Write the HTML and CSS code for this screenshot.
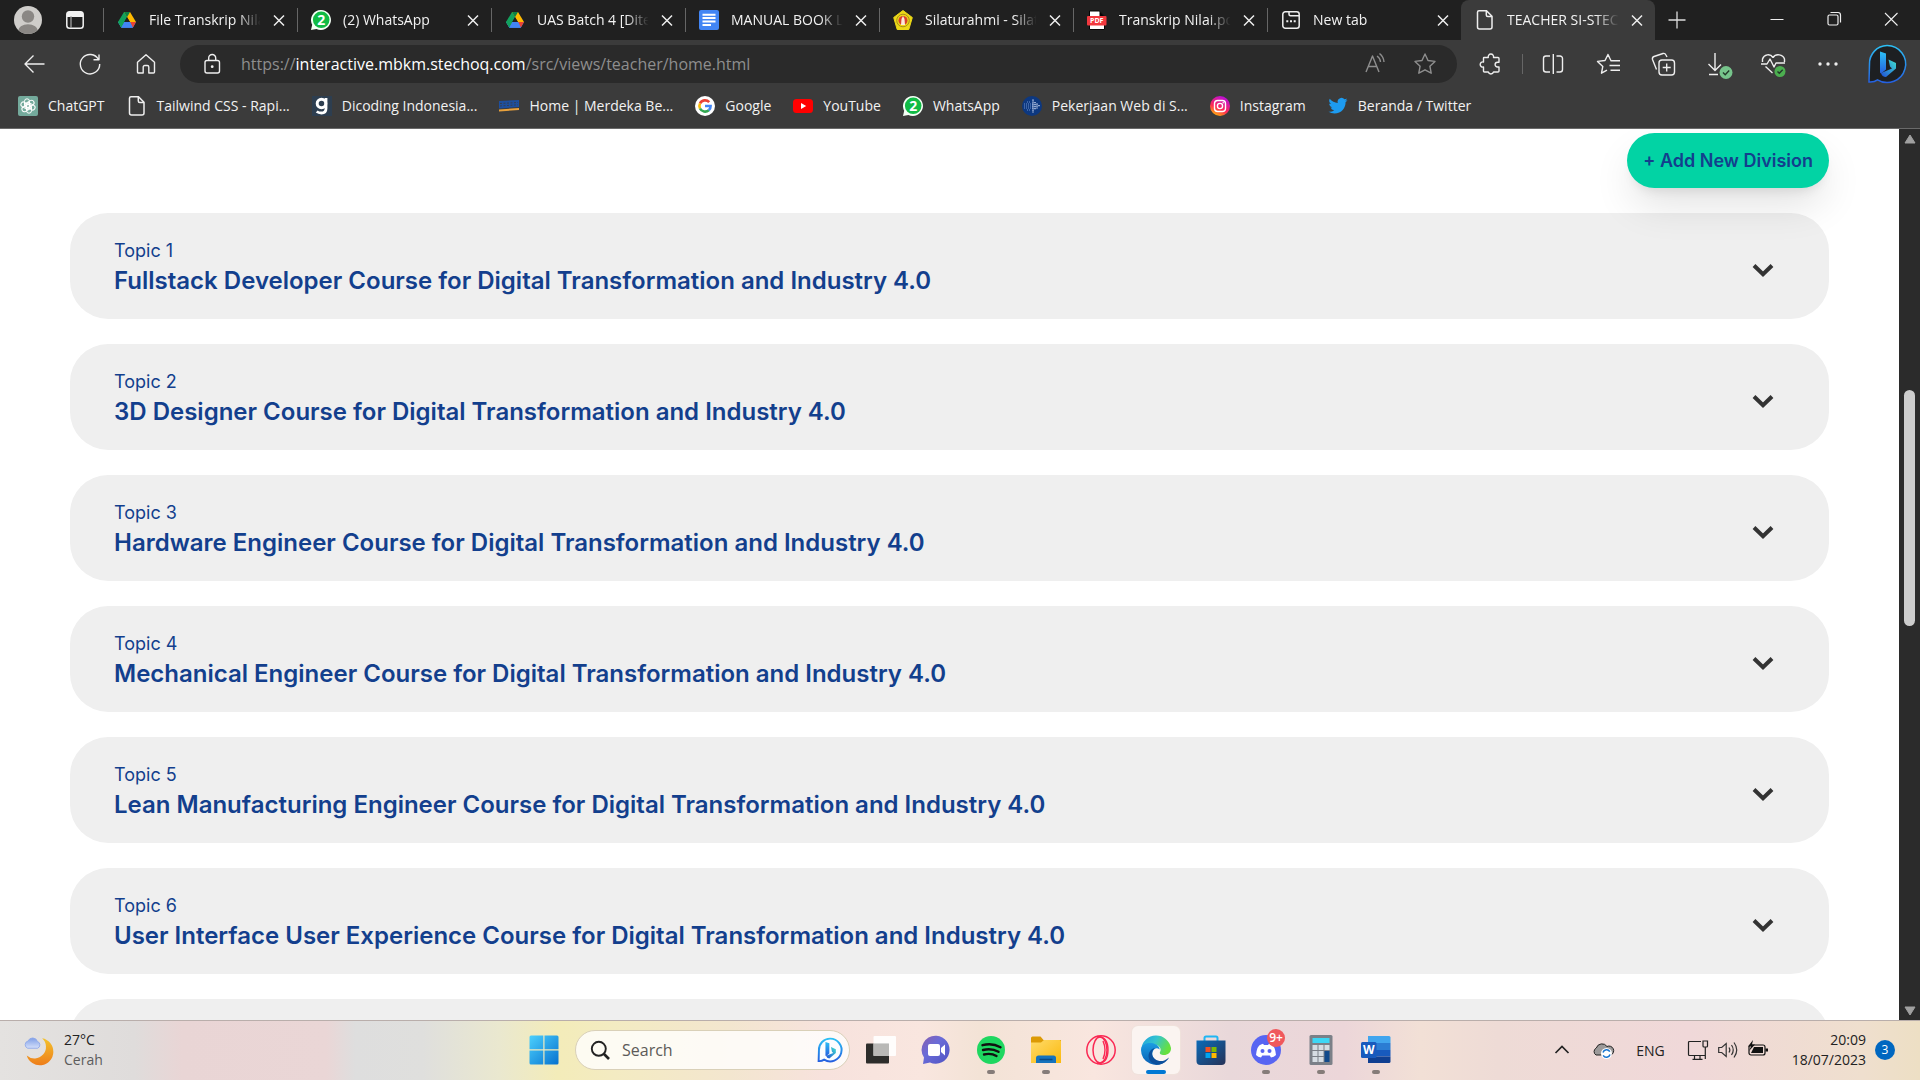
FILE: index.html
```html
<!DOCTYPE html>
<html lang="en">
<head>
<meta charset="utf-8">
<title>TEACHER SI-STECHOQ</title>
<link rel="stylesheet" href="styles.css">
</head>
<body>
<svg class="defs" width="0" height="0" aria-hidden="true">
  <defs>
    <linearGradient id="bingA" x1="0" y1="0" x2="0" y2="1"><stop offset="0" stop-color="#2cc0f5"/><stop offset="1" stop-color="#2560e0"/></linearGradient>
    <linearGradient id="bingB" x1="0" y1="1" x2="1" y2="0"><stop offset="0" stop-color="#1f4fd8"/><stop offset="1" stop-color="#3fe0d0"/></linearGradient>
    <linearGradient id="insta" x1="0.2" y1="1" x2="0.7" y2="0"><stop offset="0" stop-color="#ffc400"/><stop offset="0.4" stop-color="#ff2a55"/><stop offset="1" stop-color="#b80de0"/></linearGradient>
    <linearGradient id="winA" x1="0" y1="0" x2="1" y2="1"><stop offset="0" stop-color="#4cd0fd"/><stop offset="1" stop-color="#0672cf"/></linearGradient>
    <linearGradient id="moonA" x1="0" y1="0" x2="0" y2="1"><stop offset="0" stop-color="#f3c22c"/><stop offset="1" stop-color="#ee7d1a"/></linearGradient>
    <linearGradient id="cloudA" x1="0" y1="0" x2="0" y2="1"><stop offset="0" stop-color="#7f9ee6"/><stop offset="1" stop-color="#d5e0fa"/></linearGradient>
    <linearGradient id="chatA" x1="0" y1="0" x2="1" y2="1"><stop offset="0" stop-color="#8a5fae"/><stop offset="0.4" stop-color="#6a6cd8"/><stop offset="1" stop-color="#4f52c2"/></linearGradient>
    <linearGradient id="foldA" x1="0" y1="0" x2="1" y2="1"><stop offset="0" stop-color="#ffdb6a"/><stop offset="1" stop-color="#fbb90d"/></linearGradient>
    <linearGradient id="edgeA" x1="0" y1="0" x2="1" y2="0.4"><stop offset="0" stop-color="#1e9fe0"/><stop offset="0.5" stop-color="#35c4cf"/><stop offset="1" stop-color="#66e03f"/></linearGradient>
    <linearGradient id="edgeB" x1="0" y1="0" x2="0" y2="1"><stop offset="0" stop-color="#1b9de2"/><stop offset="1" stop-color="#0a5fb4"/></linearGradient>
    <linearGradient id="storeA" x1="0" y1="0" x2="1" y2="1"><stop offset="0" stop-color="#0b6bb8"/><stop offset="1" stop-color="#263257"/></linearGradient>
    <symbol id="close" viewBox="0 0 20 20"><path d="M5 5.500l10 10M15 5.500l-10 10" stroke="#eee" stroke-width="1.500" fill="none"/></symbol>
    <symbol id="drive" viewBox="0 0 20 20"><path d="M7 2h6L7.500 11.500 4.300 17.500 1 12z" fill="#12a15c"/><path d="M7 2h6l6 10h-6z" fill="#ffba00"/><path d="M7 2h6l-3 5.200z" fill="#0c8043"/><path d="M4.300 12H19l-3.200 5.700H4.300L1 12z" fill="#4285f4"/><path d="M13 12h6l-3.200 5.700z" fill="#ea4335"/><path d="M1 12l3.300 5.700L7.500 12 5 8z" fill="#12a15c"/><path d="M4.300 17.700L7.500 12h5.500l2.800 5.700z" fill="#4285f4"/><path d="M10 7.300l2.800 4.700H7.300z" fill="#202020"/></symbol>
    <symbol id="page" viewBox="0 0 20 20"><path d="M4 .8h7.500L17 6.300V17a2 2 0 0 1-2 2H4.500a2 2 0 0 1-2-2V2.300A1.500 1.500 0 0 1 4 .8zM11.300 1v4a1.500 1.500 0 0 0 1.500 1.500h4" fill="none" stroke="#eee" stroke-width="1.500"/></symbol>
    <symbol id="whats" viewBox="0 0 20 20"><path d="M10 0a10 10 0 1 1-4.600 18.900L0 20l1.200-5.200A10 10 0 0 1 10 0z" fill="#f4fff6"/><circle cx="10.200" cy="9.800" r="8.300" fill="#10bb45"/><text x="10.200" y="15" text-anchor="middle" class="whats-num">2</text></symbol>
    <symbol id="chev" viewBox="0 0 24 16"><path d="M3 2.500l9 8.700 9-8.700" fill="none" stroke="#333" stroke-width="4"/></symbol>
  </defs>
</svg>

<header class="browser">
  <div class="tabstrip">
    <button class="avatar" aria-label="Profile"><svg viewBox="0 0 28 28"><clipPath id="av"><circle cx="14" cy="14" r="14"/></clipPath><g clip-path="url(#av)"><rect width="28" height="28" fill="#cfcdca"/><circle cx="14" cy="10.500" r="6.200" fill="#8a8784"/><ellipse cx="14" cy="25" rx="10" ry="6.800" fill="#8a8784"/></g></svg></button>
    <button class="workspace" aria-label="Tab actions"><svg viewBox="0 0 20 20"><path d="M2 7V4.500A3 3 0 0 1 5 1.500h10a3 3 0 0 1 3 3V7z" fill="#f2f2f2"/><rect x="1.800" y="1.800" width="16.400" height="16.400" rx="2.800" fill="none" stroke="#f2f2f2" stroke-width="1.500"/><path d="M6 6v12" stroke="#aaa" stroke-width="1.200"/></svg></button>
    <div class="tab"><svg class="fav"><use href="#drive"/></svg><span class="tab-title">File Transkrip Nilai</span><button class="tab-close" aria-label="Close tab"><svg><use href="#close"/></svg></button></div>
    <div class="tab"><svg class="fav"><use href="#whats"/></svg><span class="tab-title">(2) WhatsApp</span><button class="tab-close" aria-label="Close tab"><svg><use href="#close"/></svg></button></div>
    <div class="tab"><svg class="fav"><use href="#drive"/></svg><span class="tab-title">UAS Batch 4 [Ditem</span><button class="tab-close" aria-label="Close tab"><svg><use href="#close"/></svg></button></div>
    <div class="tab"><svg class="fav" viewBox="0 0 20 20"><rect width="20" height="20" rx="2" fill="#4285f4"/><path d="M3.500 4.700h13M3.500 8h13M3.500 11.500h13M3.500 15h8.500" stroke="#fff" stroke-width="1.900"/></svg><span class="tab-title">MANUAL BOOK LM</span><button class="tab-close" aria-label="Close tab"><svg><use href="#close"/></svg></button></div>
    <div class="tab"><svg class="fav" viewBox="0 0 20 20"><path d="M10 .5l9.300 7-3.500 12H4.200L.7 7.500z" fill="#ecd916" stroke="#ecd916" stroke-linejoin="round"/><circle cx="10" cy="10.500" r="6.300" fill="none" stroke="#a88c1c"/><circle cx="10" cy="10.500" r="4.500" fill="#d8412c"/><path d="M10 6l1.500 3 .5 6H8l.5-6z" fill="#fbe9d8"/></svg><span class="tab-title">Silaturahmi - Silatu</span><button class="tab-close" aria-label="Close tab"><svg><use href="#close"/></svg></button></div>
    <div class="tab"><svg class="fav" viewBox="0 0 20 20"><path d="M2.500 1h10L17.500 6v13.500h-15z" fill="#fff" stroke="#050505"/><path d="M12.500 1v5h5z" fill="#050505"/><rect x="0" y="6" width="19.500" height="9.500" rx="1" fill="#f2383e"/><text x="9.700" y="13.300" text-anchor="middle" class="pdf-num">PDF</text></svg><span class="tab-title">Transkrip Nilai.pdf</span><button class="tab-close" aria-label="Close tab"><svg><use href="#close"/></svg></button></div>
    <div class="tab"><svg class="fav" viewBox="0 0 20 20"><rect x="1.800" y="1.800" width="16.400" height="16.400" rx="2.500" fill="none" stroke="#eee" stroke-width="1.500"/><path d="M8 2v2.200a1.500 1.500 0 0 0 1.500 1.500H18" fill="none" stroke="#eee" stroke-width="1.500"/><path d="M5.300 11.300h2M9 11.300h2M12.700 11.300h2" stroke="#eee" stroke-width="1.900"/></svg><span class="tab-title">New tab</span><button class="tab-close" aria-label="Close tab"><svg><use href="#close"/></svg></button></div>
    <div class="tab active"><svg class="fav"><use href="#page"/></svg><span class="tab-title">TEACHER SI-STECHO</span><button class="tab-close" aria-label="Close tab"><svg><use href="#close"/></svg></button></div>
    <button class="newtab" aria-label="New tab"><svg viewBox="0 0 20 20"><path d="M10 1.500v17M1.500 10h17" stroke="#ddd" stroke-width="1.300"/></svg></button>
    <div class="winctl">
      <button aria-label="Minimize"><svg viewBox="0 0 20 20"><path d="M3.500 10.500h13" stroke="#eee" stroke-width="1"/></svg></button>
      <button aria-label="Restore"><svg viewBox="0 0 20 20"><rect x="4" y="6" width="10" height="10" rx="1.500" fill="none" stroke="#eee" stroke-width="1.200"/><path d="M6.500 3.500H14A2.500 2.500 0 0 1 16.500 6v7.500" fill="none" stroke="#eee" stroke-width="1.200"/></svg></button>
      <button aria-label="Close window"><svg viewBox="0 0 20 20"><path d="M4 4l12.500 12.500M16.500 4L4 16.500" stroke="#eee" stroke-width="1.100"/></svg></button>
    </div>
  </div>

  <div class="toolbar">
    <div class="navbtns">
      <button aria-label="Back"><svg viewBox="0 0 24 24"><path d="M22.500 12H3M11.500 3.500L3 12l8.500 8.500" class="ln"/></svg></button>
      <button aria-label="Refresh"><svg viewBox="0 0 24 24"><path d="M20.500 7.500A9.700 9.700 0 1 0 21.700 12M21 2.500v5.300h-5.500" class="ln"/></svg></button>
      <button aria-label="Home"><svg viewBox="0 0 24 24"><path d="M3.500 10.200L12 2.700l8.500 7.500v9.800a1 1 0 0 1-1 1h-4.700v-6a1.500 1.500 0 0 0-1.500-1.500h-2.600A1.500 1.500 0 0 0 9.200 15v6H4.500a1 1 0 0 1-1-1z" class="ln"/></svg></button>
    </div>
    <div class="urlbar">
      <svg class="i24" viewBox="0 0 24 24"><rect x="5" y="8.500" width="14.500" height="12.500" rx="2" class="ln"/><path d="M8.700 8.500V6a3.500 3.500 0 0 1 7 0v2.500" class="ln"/><circle cx="12.200" cy="14.700" r="1.400" fill="#eee"/></svg>
      <a class="url" href="#">https://<b>interactive.mbkm.stechoq.com</b>/src/views/teacher/home.html</a>
      <button aria-label="Read aloud"><svg class="dim" viewBox="0 0 24 24"><path d="M3 20L9.500 4l6.500 16M5.300 14.500h8.500M14 4a8 8 0 0 1 3.500 6M16.500 1.500A12 12 0 0 1 21 10" class="ln"/></svg></button>
      <button aria-label="Add to favorites"><svg class="dim" viewBox="0 0 24 24"><path d="M12 2l3 6.500 7 .9-5.100 4.800 1.300 7L12 17.800l-6.200 3.400 1.300-7L2 9.400l7-.9z" class="ln"/></svg></button>
    </div>
    <div class="tools">
      <button aria-label="Extensions"><svg viewBox="0 0 24 24"><path d="M5 5.500h4.300a2.700 2.700 0 1 1 5.200 0H19q1 0 1 1v3.700h-1.500a2.400 2.400 0 0 0 0 4.800H20v4q0 1-1 1h-4.500a2.700 2.700 0 0 1-5.200 0H5.500q-1 0-1-1v-4a2.600 2.600 0 1 1 0-5V6q0-.5.500-.5z" class="ln"/></svg></button>
      <i class="tsep"></i>
      <button aria-label="Split screen"><svg viewBox="0 0 24 24"><path d="M9 4H5a2.500 2.500 0 0 0-2.500 2.500v11A2.500 2.500 0 0 0 5 20h4M15.500 4H19a2.500 2.500 0 0 1 2.500 2.500v11A2.500 2.500 0 0 1 19 20h-3.500M12.300 2v20" class="ln"/></svg></button>
      <button aria-label="Favorites"><svg viewBox="0 0 24 24"><path d="M15 8.700L12 2.500 9 8.500l-7.500.9 5.300 5-1.300 6.800 5.500-3M14.500 8.700H24M13.500 13.500H24M14.500 18.200H24" class="ln"/></svg></button>
      <button aria-label="Collections"><svg viewBox="0 0 24 24"><rect x="8" y="8" width="15.500" height="15" rx="3" class="ln"/><path d="M15.700 11.500v8M11.700 15.500h8M5.500 17.500L1.500 7.500Q1 5.300 3 4.500l9-3q2-.5 2.800 1.200L16 5" class="ln"/></svg></button>
      <button aria-label="Downloads"><svg viewBox="0 0 24 24"><path d="M9 1v17M2.500 12L9 18.500l6-6M3 22.500h9" class="ln"/><circle cx="20" cy="20.500" r="6.500" fill="#76c48b"/><path d="M17 20.500l2.200 2.200 4-4.200" fill="none" stroke="#23392a" stroke-width="1.400"/></svg></button>
      <button aria-label="Performance"><svg viewBox="0 0 24 24"><path d="M12 5.500C9 1 3 2.500 1.500 7v3M23.500 10V7C22 2.500 15 1 12 5.500M0 12h6l3-5 4 8 2-4h9M4.500 14.500l7 6.500" class="ln"/><circle cx="19" cy="19.500" r="5.500" fill="#4caf50"/><path d="M16.500 19.500l1.800 1.800 3.400-3.500" fill="none" stroke="#23392a" stroke-width="1.400"/></svg></button>
      <button aria-label="Settings and more"><svg viewBox="0 0 24 24"><circle cx="4" cy="12" r="1.700" fill="#eee"/><circle cx="12" cy="12" r="1.700" fill="#eee"/><circle cx="20" cy="12" r="1.700" fill="#eee"/></svg></button>
    </div>
    <button class="bing" aria-label="Bing chat"><svg viewBox="0 0 40 40"><path d="M20 1.500a18.500 18.500 0 1 1-9.500 34.300Q7 38.500 2 38l.5-18A18 18 0 0 1 20 1.500z" fill="#1d1f22" stroke="url(#bingA)" stroke-width="1.500"/><path d="M13 7.500l6 2v16l-5 4-1-1z" fill="url(#bingA)"/><path d="M21.500 15.500l7.500 3.500v5.500l-10 8.500q-4 0-5-4l11-4.500-2-2z" fill="url(#bingB)"/></svg></button>
  </div>

  <nav class="bookmarks">
    <a href="#"><svg viewBox="0 0 20 20"><rect width="20" height="20" rx="2" fill="#74aa9c"/><g fill="none" stroke="#fff" stroke-width="1"><rect x="6.500" y="2.800" width="5" height="9.500" rx="2.500"/><rect x="6.500" y="2.800" width="5" height="9.500" rx="2.500" transform="rotate(60 10 10)"/><rect x="6.500" y="2.800" width="5" height="9.500" rx="2.500" transform="rotate(120 10 10)"/><rect x="6.500" y="2.800" width="5" height="9.500" rx="2.500" transform="rotate(180 10 10)"/><rect x="6.500" y="2.800" width="5" height="9.500" rx="2.500" transform="rotate(240 10 10)"/><rect x="6.500" y="2.800" width="5" height="9.500" rx="2.500" transform="rotate(300 10 10)"/></g></svg>ChatGPT</a>
    <a href="#"><svg><use href="#page"/></svg>Tailwind CSS - Rapi...</a>
    <a href="#"><svg viewBox="0 0 20 20"><rect width="20" height="20" fill="#2d3e50"/><circle cx="9.500" cy="7.500" r="4.300" fill="none" stroke="#fff" stroke-width="3"/><path d="M14 2v10.500q0 4.500-4.500 4.500-3 0-4.800-1.500" fill="none" stroke="#fff" stroke-width="2.800"/></svg>Dicoding Indonesia...</a>
    <a href="#"><svg viewBox="0 0 20 20"><path d="M0 5l20-1v7L0 12.500z" fill="#1e4f9e"/><path d="M1 7.500l18-1M1 10l18-1.200" stroke="#3b3b3b" stroke-width=".8" stroke-dasharray="2 1.500"/><path d="M0 13.500l20-1.500v2L0 15.500z" fill="#e9a13c"/></svg>Home | Merdeka Be...</a>
    <a href="#"><svg viewBox="0 0 20 20"><circle cx="10" cy="10" r="10" fill="#fff"/><g fill="none" stroke-width="2.600"><path d="M14.200 6.200A5.600 5.600 0 0 0 5 7.500" stroke="#ea4335"/><path d="M5 7.500a5.600 5.600 0 0 0 0 5" stroke="#fbbc05"/><path d="M5 12.500a5.600 5.600 0 0 0 8.800 1.700" stroke="#34a853"/><path d="M13.800 14.200A5.600 5.600 0 0 0 15.600 10H10" stroke="#4285f4"/></g></svg>Google</a>
    <a href="#"><svg viewBox="0 0 20 20"><rect y="3" width="20" height="14" rx="3.500" fill="#f00"/><path d="M8 7l5.200 3L8 13z" fill="#fff"/></svg>YouTube</a>
    <a href="#"><svg><use href="#whats"/></svg>WhatsApp</a>
    <a href="#"><svg viewBox="0 0 20 20"><circle cx="10" cy="10" r="10" fill="#0d3880"/><path d="M2 8h9M2 10h9M2 12h9M5 6h3M5 14h3" stroke="#6f90cc" stroke-width="1" stroke-dasharray="1 1"/><path d="M11 3.500v13M13 6v8M15 7.500v5M17 9v2" stroke="#dde6fa" stroke-width="1.300" stroke-dasharray="1.300 .7"/></svg>Pekerjaan Web di S...</a>
    <a href="#"><svg viewBox="0 0 20 20"><circle cx="10" cy="10" r="10" fill="url(#insta)"/><rect x="4.500" y="4.500" width="11" height="11" rx="3.200" fill="none" stroke="#fff" stroke-width="1.400"/><circle cx="10" cy="10" r="2.600" fill="none" stroke="#fff" stroke-width="1.400"/><circle cx="13.200" cy="6.800" r=".8" fill="#fff"/></svg>Instagram</a>
    <a href="#"><svg viewBox="2 2 20 20"><path d="M21.500 5.900q-1 .5-2.200.6 1.200-.7 1.700-2.100-1.100.7-2.500.9A3.900 3.900 0 0 0 11.800 9Q7 8.700 3.700 4.800q-1.500 3.100 1.200 5.200-.9 0-1.700-.5.100 3 3.100 3.900-.8.200-1.700.1.900 2.500 3.600 2.700-2.400 2-5.700 1.600 2.700 1.700 6 1.700c7 0 11.200-5.700 11.100-11.500q1.200-.9 1.900-2.100z" fill="#1d9bf0"/></svg>Beranda / Twitter</a>
  </nav>
</header>

<div class="viewport">
  <main class="page">
    <div class="actions"><button class="add">+ Add New Division</button></div>
    <article class="topic"><div><p>Topic 1</p><h2>Fullstack Developer Course for Digital Transformation and Industry 4.0</h2></div><button aria-label="Expand topic 1"><svg><use href="#chev"/></svg></button></article>
    <article class="topic"><div><p>Topic 2</p><h2>3D Designer Course for Digital Transformation and Industry 4.0</h2></div><button aria-label="Expand topic 2"><svg><use href="#chev"/></svg></button></article>
    <article class="topic"><div><p>Topic 3</p><h2>Hardware Engineer Course for Digital Transformation and Industry 4.0</h2></div><button aria-label="Expand topic 3"><svg><use href="#chev"/></svg></button></article>
    <article class="topic"><div><p>Topic 4</p><h2>Mechanical Engineer Course for Digital Transformation and Industry 4.0</h2></div><button aria-label="Expand topic 4"><svg><use href="#chev"/></svg></button></article>
    <article class="topic"><div><p>Topic 5</p><h2>Lean Manufacturing Engineer Course for Digital Transformation and Industry 4.0</h2></div><button aria-label="Expand topic 5"><svg><use href="#chev"/></svg></button></article>
    <article class="topic"><div><p>Topic 6</p><h2>User Interface User Experience Course for Digital Transformation and Industry 4.0</h2></div><button aria-label="Expand topic 6"><svg><use href="#chev"/></svg></button></article>
    <article class="topic"></article>
  </main>
  <div class="scrollbar">
    <svg viewBox="0 0 12 10"><path d="M6 1l5 8H1z" fill="#a0a0a0" stroke="#a0a0a0" stroke-linejoin="round"/></svg>
    <i></i><i class="thumb"></i><i></i>
    <svg viewBox="0 0 12 10"><path d="M6 9l5-8H1z" fill="#a0a0a0" stroke="#a0a0a0" stroke-linejoin="round"/></svg>
  </div>
</div>

<footer class="taskbar">
  <button class="weather">
    <svg viewBox="0 0 32 36"><path d="M20 4.500a15 15 0 1 1-17 19 12.500 12.500 0 0 0 17-19z" fill="url(#moonA)"/><path d="M4 15.500a4.200 4.200 0 0 1 .5-8 5.500 5.500 0 0 1 10.300.5 4 4 0 0 1 .2 7.500z" fill="url(#cloudA)" stroke="#8fa9ea"/></svg>
    <span><span class="temp">27°C</span><span class="cond">Cerah</span></span>
  </button>
  <div class="apps">
    <button class="app" aria-label="Start"><svg viewBox="0 0 30 30"><path d="M.5 2a1.500 1.500 0 0 1 1.500-1.500h12.300v13.800H.5zM15.500.5H28A1.500 1.500 0 0 1 29.500 2v12.300h-14zM.5 15.500h13.800v14H2A1.500 1.500 0 0 1 .5 28zM15.500 15.500h14V28a1.500 1.500 0 0 1-1.500 1.500H15.500z" fill="url(#winA)"/></svg></button>
    <div class="search"><svg class="i20" viewBox="0 0 20 20"><circle cx="8.800" cy="8.800" r="7" fill="none" stroke="#222" stroke-width="1.900"/><path d="M13.500 13.500l5.500 5.500" stroke="#222" stroke-width="2.600"/></svg><input type="text" placeholder="Search" aria-label="Search"><svg class="i26" viewBox="0 0 40 40"><path d="M20 2.500a17.500 17.500 0 1 1-9 32.300Q7 37.500 2.500 37l.5-17A17 17 0 0 1 20 2.500z" fill="#fbfdff" stroke="url(#bingA)" stroke-width="3"/><path d="M13 7.500l6 2v16l-5 4-1-1z" fill="url(#bingA)"/><path d="M21.500 15.500l7.500 3.500v5.500l-10 8.500q-4 0-5-4l11-4.500-2-2z" fill="url(#bingB)"/></svg></div>
    <button class="app" aria-label="Task view"><svg viewBox="0 0 30 30"><rect x="0" y="8.500" width="23" height="20" rx="1" fill="#2d2d2b"/><rect x="7.500" y="1" width="22.500" height="20" rx="1" fill="#fff" fill-opacity=".9"/><path d="M7.500 8.500H23V21H7.500z" fill="#b9b8b6"/></svg></button>
    <button class="app" aria-label="Chat"><svg viewBox="0 0 30 30"><path d="M15.500.8a14 14 0 1 1-6.500 26.800L2 29l1-6.500A14 14 0 0 1 15.500.8z" fill="url(#chatA)"/><rect x="7" y="9" width="12" height="12" rx="2" fill="#fff"/><path d="M20 13l4-3.500v11L20 17z" fill="#fff"/></svg></button>
    <button class="app run" aria-label="Spotify"><svg viewBox="0 0 30 30"><circle cx="15" cy="15" r="14" fill="#1ed760"/><path d="M6.500 10.200q9.500-2.700 18 2M7 15q8.500-2.200 15.500 1.800M8 19.500q7-1.700 12.500 1.500" fill="none" stroke="#111" stroke-width="2.400" stroke-linecap="round"/></svg></button>
    <button class="app run" aria-label="File Explorer"><svg viewBox="0 0 30 30"><path d="M0 3q0-1.500 1.500-1.500h8l3 3.500H30v5H0z" fill="#dc9a05"/><path d="M0 7.500h10l3-2.500h15.500Q30 5 30 6.500V28H0z" fill="url(#foldA)"/><path d="M5 28v-5q0-2.500 2.500-2.500h15Q25 20.500 25 23v5z" fill="#1673bd"/><path d="M8.500 24.500h13" stroke="#0b4a86" stroke-width="1.500"/></svg></button>
    <button class="app" aria-label="Opera GX"><svg viewBox="0 0 30 30"><circle cx="15" cy="15" r="14.200" fill="none" stroke="#fa2853" stroke-width="1.500"/><ellipse cx="14" cy="15" rx="7" ry="13" fill="none" stroke="#fa2853" stroke-width="1.500"/><path d="M11 1.500q11 0 11 13.500T11 28.500M17 6q4 9 0 18" fill="none" stroke="#fa2853" stroke-width="1.400"/></svg></button>
    <button class="app current" aria-label="Microsoft Edge"><svg viewBox="0 0 30 30"><path d="M.3 14A15 15 0 0 1 30 13c.3 5-4 7.500-8 7-3-.3-4-2-2.500-4 1-3-2-6.500-6.500-6.500C6 9.500 1 12 .3 14z" fill="url(#edgeA)"/><path d="M0 15C0 10 5 7.500 10 8c6 .5 9 4 8.500 6.500-4-4-9 2-6.500 7.500 2 5 8 8 13 4A15 15 0 0 1 0 15z" fill="url(#edgeB)"/><path d="M14 13c-4 3-4 8 0 11 4 3 9 3 14-1.500-4 8-14 9-18.500 4C5 20 9 14 14 13z" fill="#0c4f9c"/></svg></button>
    <button class="app" aria-label="Microsoft Store"><svg viewBox="0 0 30 30"><path d="M8.500 6V3q0-1.500 1.500-1.500h10q1.500 0 1.500 1.500v3" fill="none" stroke="#1fb6f4" stroke-width="2"/><path d="M.5 5.500h29V26q0 4-4 4h-21q-4 0-4-4z" fill="url(#storeA)"/><path d="M9.500 12h5v5h-5z" fill="#f25022"/><path d="M15.500 12h5v5h-5z" fill="#7fba00"/><path d="M9.500 18h5v5h-5z" fill="#00a4ef"/><path d="M15.500 18h5v5h-5z" fill="#ffb900"/></svg></button>
    <button class="app run" aria-label="Discord"><svg viewBox="0 0 30 30"><circle cx="15" cy="15" r="15" fill="#5865f2"/><path d="M10 9.500l2-.8 1 1.300h4l1-1.300 2 .8q4 1 5 10.500-2 2-5 2.500l-1.300-2h-7.400l-1.300 2Q7 22 5 20q1-9.500 5-10.500z" fill="#fff"/><circle cx="11.500" cy="16" r="2" fill="#5865f2"/><circle cx="18.500" cy="16" r="2" fill="#5865f2"/></svg><span class="count">9+</span></button>
    <button class="app run" aria-label="Calculator"><svg viewBox="0 0 30 30"><rect x="3.500" y="0" width="23" height="30" rx="1.500" fill="#7b8088"/><rect x="6.500" y="3" width="17" height="5" fill="#3dd7f5"/><path d="M6.500 10h5v5h-5zM12.500 10h5v5h-5zM18.500 10h5v5h-5zM6.500 16h5v5h-5zM12.500 16h5v5h-5zM6.500 22h5v5h-5zM12.500 22h5v5h-5z" fill="#d6dde3"/><path d="M18.500 16h5v11h-5z" fill="#114a8b"/></svg></button>
    <button class="app run" aria-label="Word"><svg viewBox="0 0 30 30"><path d="M7 1h21q1.500 0 1.500 1.500V8H7z" fill="#41a5ee"/><path d="M7 8h22.500v7H7z" fill="#2b7cd3"/><path d="M7 15h22.500v6.500H7z" fill="#185abd"/><path d="M7 21.500h22.500v5q0 1.500-1.500 1.500H7z" fill="#103f91"/><rect x="0" y="7" width="15.500" height="16" rx="1.500" fill="#185abd"/><text x="7.700" y="19.200" text-anchor="middle" class="word-num">W</text></svg></button>
  </div>
  <div class="tray">
    <button aria-label="Show hidden icons"><svg viewBox="0 0 20 20"><path d="M3.500 13L10 6.500l6.500 6.500" fill="none" stroke="#222" stroke-width="1.700"/></svg></button>
    <button aria-label="OneDrive"><svg viewBox="0 0 20 20"><path d="M4 15a4 4 0 0 1 .3-7A6 6 0 0 1 15 6.500a4.500 4.500 0 0 1 4 8.500z" fill="#9c9a9a" stroke="#222"/><circle cx="14.500" cy="13.500" r="5.500" fill="#fff"/><path d="M11 12.500a3.700 3.700 0 0 1 6.800-.8M18 14.500a3.700 3.700 0 0 1-6.800.9" fill="none" stroke="#1473d0" stroke-width="1.500"/></svg></button>
    <span class="lang">ENG</span>
    <div class="sys">
      <svg viewBox="0 0 20 20"><path d="M13 1.500H1.500q-1 0-1 1v12q0 1 1 1H17M6.500 15.500v3.500M12 15.500v3.500M4.500 19.300h10M15 1h4.500v5q0 1-1 1H16q-1 0-1-1zM17.300 7v12" fill="none" stroke="#222" stroke-width="1.200"/></svg>
      <svg viewBox="0 0 20 20"><path d="M.7 7.500h3l4.500-4v13l-4.500-4h-3zM11 7.500q1.700 2.500 0 5M13.500 5q3.500 5 0 10M16 2.500q5.500 7.500 0 15" fill="none" stroke="#333" stroke-width="1.200"/></svg>
      <svg viewBox="0 0 20 20"><rect x="1" y="5" width="16" height="10" rx="2" fill="none" stroke="#111" stroke-width="1.200"/><path d="M3 13h12V7H6zM17.500 8.500H20v3h-2.500z" fill="#111"/><path d="M5 0L0 6.500h3L1 11l6-6.500H4z" fill="#111"/></svg>
    </div>
    <div class="clock"><span>20:09</span><span>18/07/2023</span></div>
    <span class="notif">3</span>
  </div>
</footer>
</body>
</html>
```
FILE: styles.css
```css
* { box-sizing: border-box; }
body {
  margin: 0;
  height: 100vh;
  display: flex;
  flex-direction: column;
  overflow: hidden;
  background: #fff;
  font-family: "Open Sans", "Noto Sans", sans-serif;
}
button { padding: 0; border: 0; background: none; font: inherit; color: inherit; display: flex; align-items: center; justify-content: center; }
a { color: inherit; text-decoration: none; }
svg { display: block; flex: none; overflow: visible; }
.defs { height: 0; }
.whats-num { font: 700 14px "Open Sans", sans-serif; fill: #fff; }
.pdf-num { font: 700 7px "Open Sans", sans-serif; fill: #fff; }
.word-num { font: 700 12px "Open Sans", sans-serif; fill: #fff; }
.ln { fill: none; stroke: #eee; stroke-width: 1.4; stroke-linejoin: round; }
.dim .ln { stroke: #8e8e8e; }

/* browser chrome */
.browser { flex: none; background: #3b3b3b; color: #f2f2f2; border-bottom: 1px solid #6a6a6a; font-size: 14px; }
.tabstrip { display: flex; align-items: stretch; height: 40px; background: #202020; }
.tabstrip > *, .winctl button { padding-bottom: 1px; }
.avatar { width: 28px; margin: 0 22px 0 14px; }
.avatar svg { width: 28px; height: 28px; }
.workspace { width: 22px; margin-right: 17px; }
.workspace svg { width: 20px; height: 20px; }
.tab { flex: 0 1 194px; min-width: 0; display: flex; align-items: center; gap: 12px; padding: 0 8px 1px 14px; background: linear-gradient(#666, #666) 0 50% / 1px 24px no-repeat; }
.fav { width: 20px; height: 20px; }
.tab-title { flex: 1; min-width: 0; overflow: hidden; white-space: nowrap; margin-right: -6px; -webkit-mask-image: linear-gradient(90deg, #000 78%, transparent 98%); mask-image: linear-gradient(90deg, #000 78%, transparent 98%); }
.tab-close, .tab-close svg { width: 20px; height: 20px; }
.tab.active { background: #3b3b3b; border-radius: 8px 8px 0 0; }
.newtab { width: 44px; }
.newtab svg { width: 20px; height: 20px; }
.winctl { display: flex; margin-left: auto; }
.winctl button { width: 57px; padding-right: 2px; }
.winctl svg { width: 20px; height: 20px; }

.toolbar { display: flex; align-items: center; height: 48px; padding: 0 13px 1px 6px; }
.navbtns { display: flex; }
.navbtns button { width: 56px; height: 38px; }
.navbtns svg, .urlbar svg, .tools svg { width: 24px; height: 24px; }
.urlbar { flex: 1; min-width: 0; display: flex; align-items: center; height: 38px; margin-left: 6px; padding: 0 20px; border-radius: 20px; background: #2a2a2a; }
.urlbar button { margin-left: 26px; }
.url { flex: 1; min-width: 0; margin-left: 17px; font-size: 16px; color: #8e8e8e; white-space: nowrap; overflow: hidden; }
.url b { font-weight: 400; color: #fff; }
.tools { display: flex; align-items: center; margin-left: 6px; }
.tools button { width: 55px; height: 38px; }
.tsep { width: 1px; height: 20px; background: #666; margin: 0 2px 0 4px; }
.bing { margin-left: 12px; }
.bing svg { width: 40px; height: 40px; }

.bookmarks { display: flex; align-items: center; gap: 22px; height: 40px; padding: 0 18px 5px; white-space: nowrap; }
.bookmarks a { display: flex; align-items: center; gap: 10px; }
.bookmarks svg { width: 20px; height: 20px; }

/* page */
.viewport { flex: 1; min-height: 0; display: flex; overflow: hidden; }
.page { flex: 1; min-width: 0; display: flex; flex-direction: column; gap: 25px; padding: 4px 70px 0; overflow: hidden; color: #133f8d; font-family: Inter, sans-serif; }
.actions { display: flex; justify-content: flex-end; position: relative; z-index: 1; }
.add { height: 55px; padding: 0 16px; border-radius: 28px; background: #02d3a4; font-size: 18px; font-weight: 600; box-shadow: 0 20px 40px -4px rgba(0, 0, 0, .12), 0 8px 12px -6px rgba(0, 0, 0, .1); }
.topic { flex: none; display: flex; align-items: center; justify-content: space-between; min-height: 106px; padding: 26px 54px 20px 44px; border-radius: 38px; background: #efefef; }
.topic p { margin: 0; font-size: 18px; line-height: 24px; }
.topic h2 { margin: 0; font-size: 24px; line-height: 36px; font-weight: 600; }
.topic svg { width: 24px; height: 16px; }
.topic button { padding-top: 3px; }

.scrollbar { flex: none; width: 21px; display: grid; grid-template-rows: auto 244fr 234fr 377fr auto; justify-items: center; padding: 5px 0 4px; background: #2b2b2b; }
.scrollbar svg { width: 12px; height: 10px; }
.thumb { width: 11px; border-radius: 6px; background: #cdcdcd; }

/* taskbar */
.taskbar { flex: none; display: grid; grid-template-columns: 1fr auto 1fr; align-items: center; height: 60px; padding-bottom: 1px; border-top: 1px solid #b9aeab; color: #222; font-size: 14px;
  background: linear-gradient(90deg, #e4e2e0 0, #dfdcdb 7%, #e9d5d5 9.5%, #ead6d6 17%, #dedede 18.5%, #dfdfdd 22%, #eae8cf 26%, #f3ecb9 29%, #f3ebc2 32%, #f3e6cf 38%, #f7e2dd 43%, #f9e6df 48%, #f3e3d6 51%, #f9e6df 57%, #e9d8da 64%, #ecd6d9 70%, #f2e0d6 74%, #eedbd6 78%, #f0d8d9 88%, #efdfce 97%, #eddfc4 100%); }
.weather { justify-self: start; gap: 11px; padding-left: 24px; text-align: left; }
.weather svg { width: 29px; height: 33px; }
.weather > span, .clock { display: flex; flex-direction: column; line-height: 20px; }
.cond { color: #5c5c5c; }
.apps { display: flex; align-items: center; gap: 7px; }
.app { position: relative; width: 48px; height: 48px; border-radius: 6px; }
.app svg { width: 30px; height: 30px; }
.run::after, .current::after { content: ""; position: absolute; left: 20px; bottom: 0; width: 8px; height: 4px; border-radius: 2px; background: #857c79; }
.current { background: #fbf4f1; box-shadow: 0 0 0 1px #f0e2dc; }
.current::after { left: 14px; width: 20px; background: #0078d4; }
.count { position: absolute; left: 25px; top: 3px; height: 18px; min-width: 18px; border-radius: 9px; background: #f0585c; color: #fff; font-size: 12px; line-height: 18px; font-weight: 600; }
.search { display: flex; align-items: center; gap: 12px; width: 275px; height: 40px; padding: 0 6px 0 14px; border: 1px solid #d9d0b8; border-radius: 20px; background: rgba(255, 255, 255, .8); }
.search input { flex: 1; min-width: 0; padding: 0; border: 0; outline: 0; background: none; font: inherit; font-size: 16px; }
.search input::placeholder { color: #5c5a58; opacity: 1; }
.i20 { width: 20px; height: 20px; }
.i26 { width: 26px; height: 26px; }
.tray { justify-self: end; display: flex; align-items: center; padding-right: 25px; }
.tray svg { width: 20px; height: 20px; }
.tray button { margin-right: 20px; }
.lang { margin: 0 23px 0 4px; }
.sys { display: flex; gap: 10px; margin-right: 24px; }
.clock { text-align: right; }
.notif { width: 20px; height: 20px; margin-left: 9px; border-radius: 10px; background: #0067c0; color: #fff; font-size: 12px; line-height: 20px; text-align: center; }
```
